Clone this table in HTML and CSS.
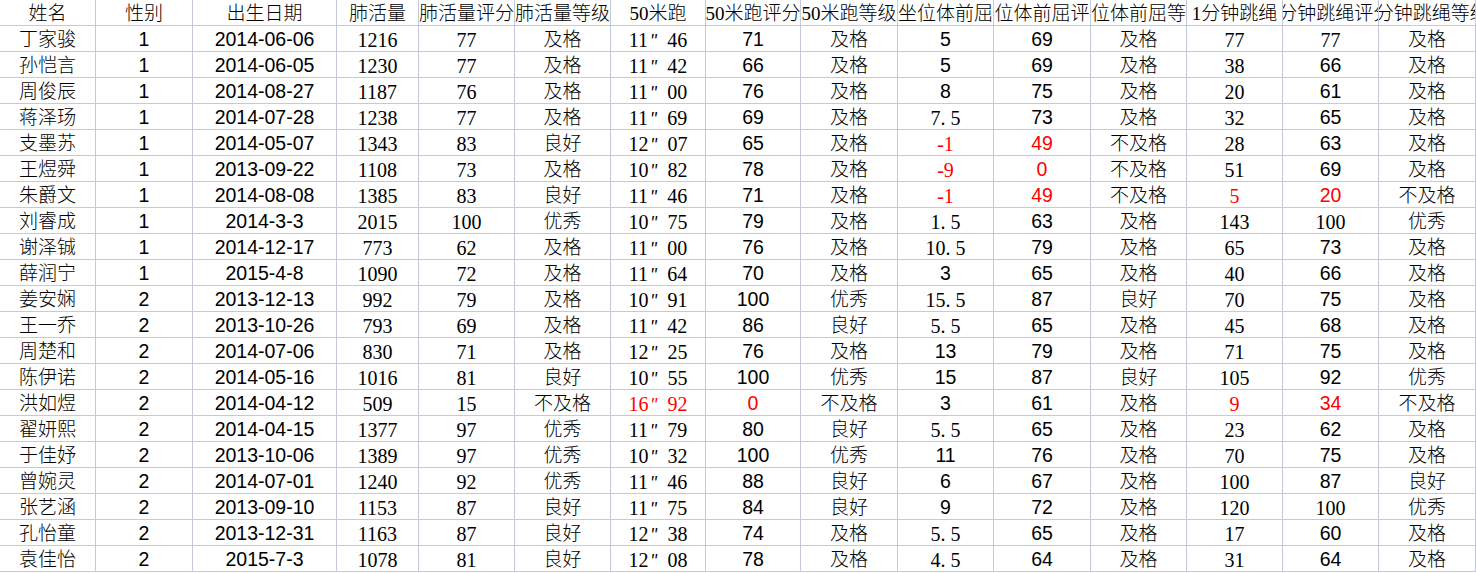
FILE: index.html
```html
<!DOCTYPE html>
<html lang="zh-CN">
<head>
<meta charset="utf-8">
<title>体测成绩</title>
<link rel="stylesheet" href="styles.css">
</head>
<body>
<div class="sheet">
<div class="h">姓名</div><div class="h">性别</div><div class="h">出生日期</div><div class="h">肺活量</div><div class="h">肺活量评分</div><div class="h">肺活量等级</div><div class="h">50米跑</div><div class="h">50米跑评分</div><div class="h">50米跑等级</div><div class="h">坐位体前屈</div><div class="h">坐位体前屈评分</div><div class="h">坐位体前屈等级</div><div class="h">1分钟跳绳</div><div class="h">1分钟跳绳评分</div><div class="h">1分钟跳绳等级</div>

<div>丁家骏</div><div>1</div><div>2014-06-06</div><div>1216</div><div>77</div><div>及格</div><div>11<span class="q">″</span>46</div><div>71</div><div>及格</div><div>5</div><div>69</div><div>及格</div><div>77</div><div class="r">77</div><div>及格</div>
<div>孙恺言</div><div>1</div><div>2014-06-05</div><div>1230</div><div>77</div><div>及格</div><div>11<span class="q">″</span>42</div><div>66</div><div>及格</div><div>5</div><div>69</div><div>及格</div><div>38</div><div>66</div><div>及格</div>
<div>周俊辰</div><div>1</div><div>2014-08-27</div><div>1187</div><div>76</div><div>及格</div><div>11<span class="q">″</span>00</div><div>76</div><div>及格</div><div>8</div><div>75</div><div>及格</div><div>20</div><div>61</div><div>及格</div>
<div>蒋泽玚</div><div>1</div><div>2014-07-28</div><div>1238</div><div>77</div><div>及格</div><div>11<span class="q">″</span>69</div><div>69</div><div>及格</div><div class="r">7<span class="p">.</span>5</div><div>73</div><div>及格</div><div>32</div><div>65</div><div>及格</div>
<div>支墨苏</div><div>1</div><div>2014-05-07</div><div>1343</div><div>83</div><div>良好</div><div>12<span class="q">″</span>07</div><div>65</div><div>及格</div><div class="r red">-1</div><div class="red">49</div><div>不及格</div><div>28</div><div>63</div><div>及格</div>
<div>王煜舜</div><div>1</div><div>2013-09-22</div><div>1108</div><div>73</div><div>及格</div><div>10<span class="q">″</span>82</div><div>78</div><div>及格</div><div class="r red">-9</div><div class="red">0</div><div>不及格</div><div>51</div><div>69</div><div>及格</div>
<div>朱爵文</div><div>1</div><div>2014-08-08</div><div>1385</div><div>83</div><div>良好</div><div>11<span class="q">″</span>46</div><div>71</div><div>及格</div><div class="r red">-1</div><div class="red">49</div><div>不及格</div><div class="red">5</div><div class="red">20</div><div>不及格</div>
<div>刘睿成</div><div>1</div><div>2014-3-3</div><div>2015</div><div>100</div><div>优秀</div><div>10<span class="q">″</span>75</div><div>79</div><div>及格</div><div class="r">1<span class="p">.</span>5</div><div>63</div><div>及格</div><div>143</div><div class="r">100</div><div>优秀</div>
<div>谢泽铖</div><div>1</div><div>2014-12-17</div><div>773</div><div>62</div><div>及格</div><div>11<span class="q">″</span>00</div><div>76</div><div>及格</div><div class="r">10<span class="p">.</span>5</div><div>79</div><div>及格</div><div>65</div><div>73</div><div>及格</div>
<div>薛润宁</div><div>1</div><div>2015-4-8</div><div>1090</div><div>72</div><div>及格</div><div>11<span class="q">″</span>64</div><div>70</div><div>及格</div><div>3</div><div>65</div><div>及格</div><div>40</div><div>66</div><div>及格</div>
<div>姜安娴</div><div>2</div><div>2013-12-13</div><div>992</div><div>79</div><div>及格</div><div>10<span class="q">″</span>91</div><div>100</div><div>优秀</div><div class="r">15<span class="p">.</span>5</div><div>87</div><div>良好</div><div>70</div><div>75</div><div>及格</div>
<div>王一乔</div><div>2</div><div>2013-10-26</div><div>793</div><div>69</div><div>及格</div><div>11<span class="q">″</span>42</div><div>86</div><div>良好</div><div class="r">5<span class="p">.</span>5</div><div>65</div><div>及格</div><div>45</div><div>68</div><div>及格</div>
<div>周楚和</div><div>2</div><div>2014-07-06</div><div>830</div><div>71</div><div>及格</div><div>12<span class="q">″</span>25</div><div>76</div><div>及格</div><div>13</div><div>79</div><div>及格</div><div>71</div><div>75</div><div>及格</div>
<div>陈伊诺</div><div>2</div><div>2014-05-16</div><div>1016</div><div>81</div><div>良好</div><div>10<span class="q">″</span>55</div><div>100</div><div>优秀</div><div>15</div><div>87</div><div>良好</div><div>105</div><div>92</div><div>优秀</div>
<div>洪如煜</div><div>2</div><div>2014-04-12</div><div>509</div><div>15</div><div>不及格</div><div class="red">16<span class="q">″</span>92</div><div class="red">0</div><div>不及格</div><div>3</div><div>61</div><div>及格</div><div class="red">9</div><div class="red">34</div><div>不及格</div>
<div>翟妍熙</div><div>2</div><div>2014-04-15</div><div>1377</div><div>97</div><div>优秀</div><div>11<span class="q">″</span>79</div><div>80</div><div>良好</div><div class="r">5<span class="p">.</span>5</div><div>65</div><div>及格</div><div>23</div><div>62</div><div>及格</div>
<div>于佳妤</div><div>2</div><div>2013-10-06</div><div>1389</div><div>97</div><div>优秀</div><div>10<span class="q">″</span>32</div><div>100</div><div>优秀</div><div>11</div><div>76</div><div>及格</div><div>70</div><div>75</div><div>及格</div>
<div>曾婉灵</div><div>2</div><div>2014-07-01</div><div>1240</div><div>92</div><div>优秀</div><div>11<span class="q">″</span>46</div><div>88</div><div>良好</div><div>6</div><div>67</div><div>及格</div><div>100</div><div>87</div><div>良好</div>
<div>张艺涵</div><div>2</div><div>2013-09-10</div><div>1153</div><div>87</div><div>良好</div><div>11<span class="q">″</span>75</div><div>84</div><div>良好</div><div>9</div><div>72</div><div>及格</div><div>120</div><div class="r">100</div><div>优秀</div>
<div>孔怡童</div><div>2</div><div>2013-12-31</div><div>1163</div><div>87</div><div>良好</div><div>12<span class="q">″</span>38</div><div>74</div><div>及格</div><div class="r">5<span class="p">.</span>5</div><div>65</div><div>及格</div><div>17</div><div>60</div><div>及格</div>
<div>袁佳怡</div><div>2</div><div>2015-7-3</div><div>1078</div><div>81</div><div>良好</div><div>12<span class="q">″</span>08</div><div>78</div><div>及格</div><div class="r">4<span class="p">.</span>5</div><div>64</div><div>及格</div><div>31</div><div>64</div><div>及格</div>
</div>
</body>
</html>
```
FILE: styles.css
```css
html, body {
  margin: 0;
  padding: 0;
  background: #ffffff;
}

.sheet {
  display: grid;
  grid-template-columns: 96px 97px 144px 82px 96px 96px 95px 95px 97px 96px 97px 96px 96px 96px 97px;
  grid-auto-rows: 26px;
  width: 1476px;
  color: #000000;
}

.sheet > div {
  box-sizing: border-box;
  border-right: 1px solid #c4c9dc;
  border-bottom: 1px solid #c4c9dc;
  display: flex;
  align-items: center;
  justify-content: center;
  overflow: hidden;
  white-space: nowrap;
  line-height: 1;
  padding-top: 2px;
  font-family: "Liberation Serif", "Noto Sans CJK SC", serif;
  font-size: 19px;
  font-weight: 300;
}

/* sans-serif numeric columns: 性别, 出生日期, 50米跑评分, 坐位体前屈, 坐位体前屈评分, 1分钟跳绳评分 */
.sheet > :nth-child(15n+2),
.sheet > :nth-child(15n+3),
.sheet > :nth-child(15n+8),
.sheet > :nth-child(15n+10),
.sheet > :nth-child(15n+11),
.sheet > :nth-child(15n+14) {
  font-family: "Liberation Sans", Arial, sans-serif;
  font-size: 19.5px;
  font-weight: 400;
}

/* serif numeric columns: 肺活量, 肺活量评分, 50米跑, 1分钟跳绳 */
.sheet > :nth-child(15n+4),
.sheet > :nth-child(15n+5),
.sheet > :nth-child(15n+7),
.sheet > :nth-child(15n+13) {
  font-family: "Liberation Serif", "Times New Roman", serif;
  font-size: 20px;
  font-weight: 400;
}

.sheet > .r {
  font-family: "Liberation Serif", "Times New Roman", serif;
  font-size: 20px;
  font-weight: 400;
}

.sheet > .h {
  font-family: "Liberation Serif", "Noto Sans CJK SC", serif;
  font-size: 19px;
  font-weight: 300;
}

.sheet > .red {
  color: #ff0000;
}

.q {
  display: inline-block;
  width: 19px;
  padding-left: 2px;
  box-sizing: border-box;
  text-align: left;
  font-family: "Noto Sans CJK SC", sans-serif;
  font-size: 17px;
}

.p {
  display: inline-block;
  width: 10px;
  text-align: left;
}
```
